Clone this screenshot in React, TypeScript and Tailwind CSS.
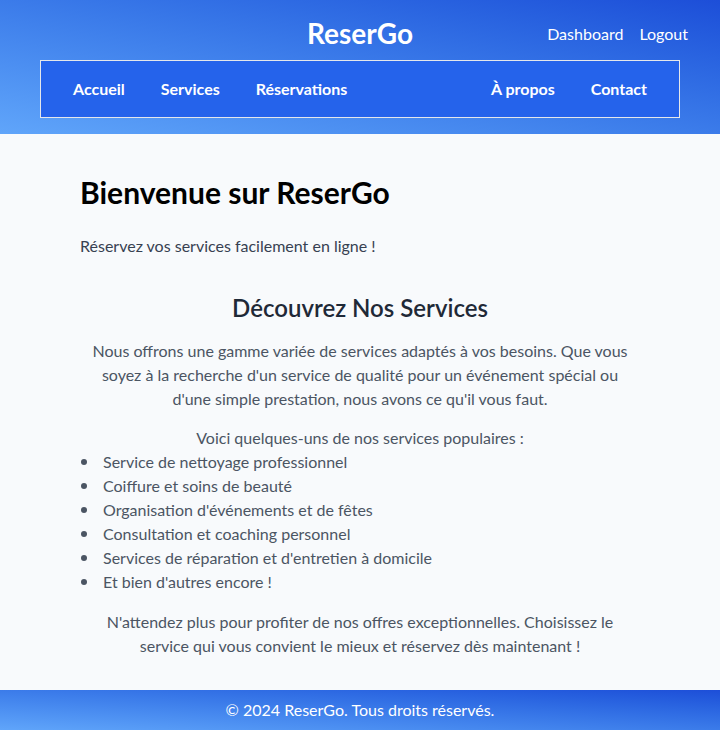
import React from "react";

export default function App() {
  const font = { fontFamily: '"Segoe UI", Lato, "Noto Sans", sans-serif' };
  const items = [
    "Service de nettoyage professionnel",
    "Coiffure et soins de beauté",
    "Organisation d'événements et de fêtes",
    "Consultation et coaching personnel",
    "Services de réparation et d'entretien à domicile",
    "Et bien d'autres encore !",
  ];
  return (
    <div className="min-h-[730px] flex flex-col bg-[#f8fafc]" style={font}>
      <header className="bg-linear-to-tr from-[#60a5fa] to-[#1d4ed8] px-10 pt-4 pb-4 text-white">
        <div className="grid grid-cols-3 items-center h-9">
          <div />
          <div className="text-center text-[28px] font-bold leading-9 -mt-[2px]">ReserGo</div>
          <div className="flex justify-end gap-4 text-base -mr-2">
            <a>Dashboard</a>
            <a>Logout</a>
          </div>
        </div>
        <nav className="mt-2 border border-[#e5e7eb] bg-[#2563eb] px-8 py-4 flex justify-between font-bold text-base leading-6">
          <div className="flex gap-9">
            <a>Accueil</a>
            <a>Services</a>
            <a>Réservations</a>
          </div>
          <div className="flex gap-9">
            <a>À propos</a>
            <a>Contact</a>
          </div>
        </nav>
      </header>
      <main className="flex-1 px-20 pt-[40px] pb-8">
        <h1 className="text-[30px] leading-9 font-bold text-black mb-6">Bienvenue sur ReserGo</h1>
        <p className="text-base leading-6 text-[#374151] mb-[34px]">Réservez vos services facilement en ligne !</p>
        <h2 className="text-2xl leading-8 font-semibold text-[#1f2937] text-center mb-[15px]">Découvrez Nos Services</h2>
        <p className="text-center text-base leading-6 text-[#4b5563] px-2">
          Nous offrons une gamme variée de services adaptés à vos besoins. Que vous soyez à la recherche d'un service de qualité pour un événement spécial ou d'une simple prestation, nous avons ce qu'il vous faut.
        </p>
        <p className="text-center text-base leading-6 text-[#4b5563] mt-[15px]">Voici quelques-uns de nos services populaires :</p>
        <ul className="text-base leading-6 text-[#4b5563]">
          {items.map((t) => (
            <li key={t} className="flex items-center">
              <span className="ml-[1px] w-[6px] h-[6px] rounded-full bg-[#4b5563] shrink-0" />
              <span className="ml-4">{t}</span>
            </li>
          ))}
        </ul>
        <p className="text-center text-base leading-6 text-[#4b5563] mt-4 px-6">
          N'attendez plus pour profiter de nos offres exceptionnelles. Choisissez le service qui vous convient le mieux et réservez dès maintenant !
        </p>
      </main>
      <footer className="bg-linear-to-tr from-[#60a5fa] to-[#1d4ed8] py-2 text-center text-white text-base leading-6">
        © 2024 ReserGo. Tous droits réservés.
      </footer>
    </div>
  );
}
